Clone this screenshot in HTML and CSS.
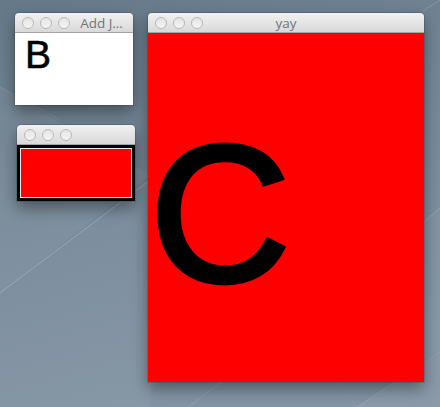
FILE: index.html
```html
<!DOCTYPE html>
<html lang="en">
<head>
  <meta charset="UTF-8">
  <title>yay</title>
  <link rel="stylesheet" href="styles.css">
</head>
<body>
  <div class="desktop">
    <!-- wallpaper -->
    <svg class="wallpaper" width="440" height="407" viewBox="0 0 440 407">
      <defs>
        <linearGradient id="bg" x1="0" y1="0" x2="0.3" y2="1">
          <stop offset="0" stop-color="#667989"/>
          <stop offset="0.55" stop-color="#788a9a"/>
          <stop offset="1" stop-color="#8394a4"/>
        </linearGradient>
      </defs>
      <rect width="440" height="407" fill="url(#bg)"/>
      <polygon points="0,87 150,175 0,293" fill="#ffffff" opacity="0.05"/>
      <polygon points="0,293 150,180 150,407 0,407" fill="#ffffff" opacity="0.03"/>
      <polygon points="357,407 440,353 440,407" fill="#ffffff" opacity="0.06"/>
      <polygon points="424,222 440,208 440,353 424,360" fill="#ffffff" opacity="0.04"/>
      <line x1="0" y1="293" x2="150" y2="180" stroke="#a6b4c2" stroke-width="1" opacity="0.7"/>
      <line x1="0" y1="87" x2="60" y2="120" stroke="#8e9eae" stroke-width="1" opacity="0.6"/>
      <line x1="188" y1="407" x2="224" y2="380" stroke="#95a5b4" stroke-width="1" opacity="0.7"/>
      <line x1="338" y1="380" x2="357" y2="407" stroke="#8d9dac" stroke-width="1" opacity="0.6"/>
      <line x1="357" y1="407" x2="440" y2="352" stroke="#9eadbb" stroke-width="1" opacity="0.7"/>
      <line x1="424" y1="222" x2="440" y2="208" stroke="#9eadbb" stroke-width="1" opacity="0.7"/>
      <line x1="423" y1="11" x2="440" y2="0" stroke="#8fa0b0" stroke-width="1" opacity="0.7"/>
    </svg>

    <div class="window win-b">
      <div class="titlebar">
        <div class="lights"><span></span><span></span><span></span></div>
        <div class="title">Add J…</div>
      </div>
      <div class="content white">
        <div class="label-b">B</div>
      </div>
    </div>

    <div class="window win-box">
      <div class="titlebar">
        <div class="lights"><span></span><span></span><span></span></div>
        <div class="title"></div>
      </div>
      <div class="content framed">
        <div class="red-box"></div>
      </div>
    </div>

    <div class="window win-c">
      <div class="titlebar centered">
        <div class="lights"><span></span><span></span><span></span></div>
        <div class="title">yay</div>
        <div></div>
      </div>
      <div class="content red">
        <div class="label-c">C</div>
      </div>
    </div>
  </div>
</body>
</html>
```

FILE: styles.css
```css
body {
  margin: 0;
  font-family: "Liberation Sans", Arial, sans-serif;
}
.desktop {
  position: relative;
  width: 440px;
  height: 407px;
  overflow: hidden;
}
.wallpaper {
  position: absolute;
  left: 0;
  top: 0;
  display: block;
}
.window {
  position: absolute;
  display: flex;
  flex-direction: column;
  border-radius: 4px 4px 0 0;
  box-shadow: 0 7px 16px rgba(0, 0, 0, 0.4), 0 0 0 1px rgba(0, 0, 0, 0.12);
}
.win-b {
  left: 15px;
  top: 13px;
  width: 118px;
  height: 92px;
}
.win-box {
  left: 17px;
  top: 125px;
  width: 118px;
  height: 76px;
}
.win-c {
  left: 148px;
  top: 13px;
  width: 276px;
  height: 369px;
}
.titlebar {
  height: 19px;
  flex: none;
  display: flex;
  align-items: center;
  border-radius: 4px 4px 0 0;
  border-bottom: 1px solid #a3a3a3;
  background: linear-gradient(#f1f1f1, #d9d9d9);
}
.titlebar.centered {
  display: grid;
  grid-template-columns: 1fr auto 1fr;
  align-items: center;
}
.lights {
  display: flex;
  gap: 6px;
  padding-left: 7px;
}
.lights span {
  width: 10px;
  height: 10px;
  border-radius: 50%;
  border: 1px solid #b8b8b8;
  background: linear-gradient(#e4e4e4, #f5f5f5);
}
.title {
  flex: 1;
  text-align: center;
  font-family: "Open Sans", "DejaVu Sans", sans-serif;
  font-size: 13.5px;
  color: #747474;
  white-space: nowrap;
  padding-top: 1px;
}
.content {
  flex: 1;
  min-height: 0;
}
.white {
  background: #fff;
}
.label-b {
  font-size: 39px;
  line-height: 1;
  padding-top: 2px;
  padding-left: 10px;
  color: #000;
  -webkit-text-stroke: 0.6px #000;
}
.framed {
  background: #000;
  padding: 3px;
  display: flex;
}
.red-box {
  flex: 1;
  background: #ff0000;
  border: 1px solid #e8e8e8;
}
.red {
  background: #ff0000;
}
.label-c {
  font-size: 194px;
  line-height: 1;
  padding-top: 84px;
  padding-left: 2px;
  color: #000;
  -webkit-text-stroke: 5px #000;
}
```
